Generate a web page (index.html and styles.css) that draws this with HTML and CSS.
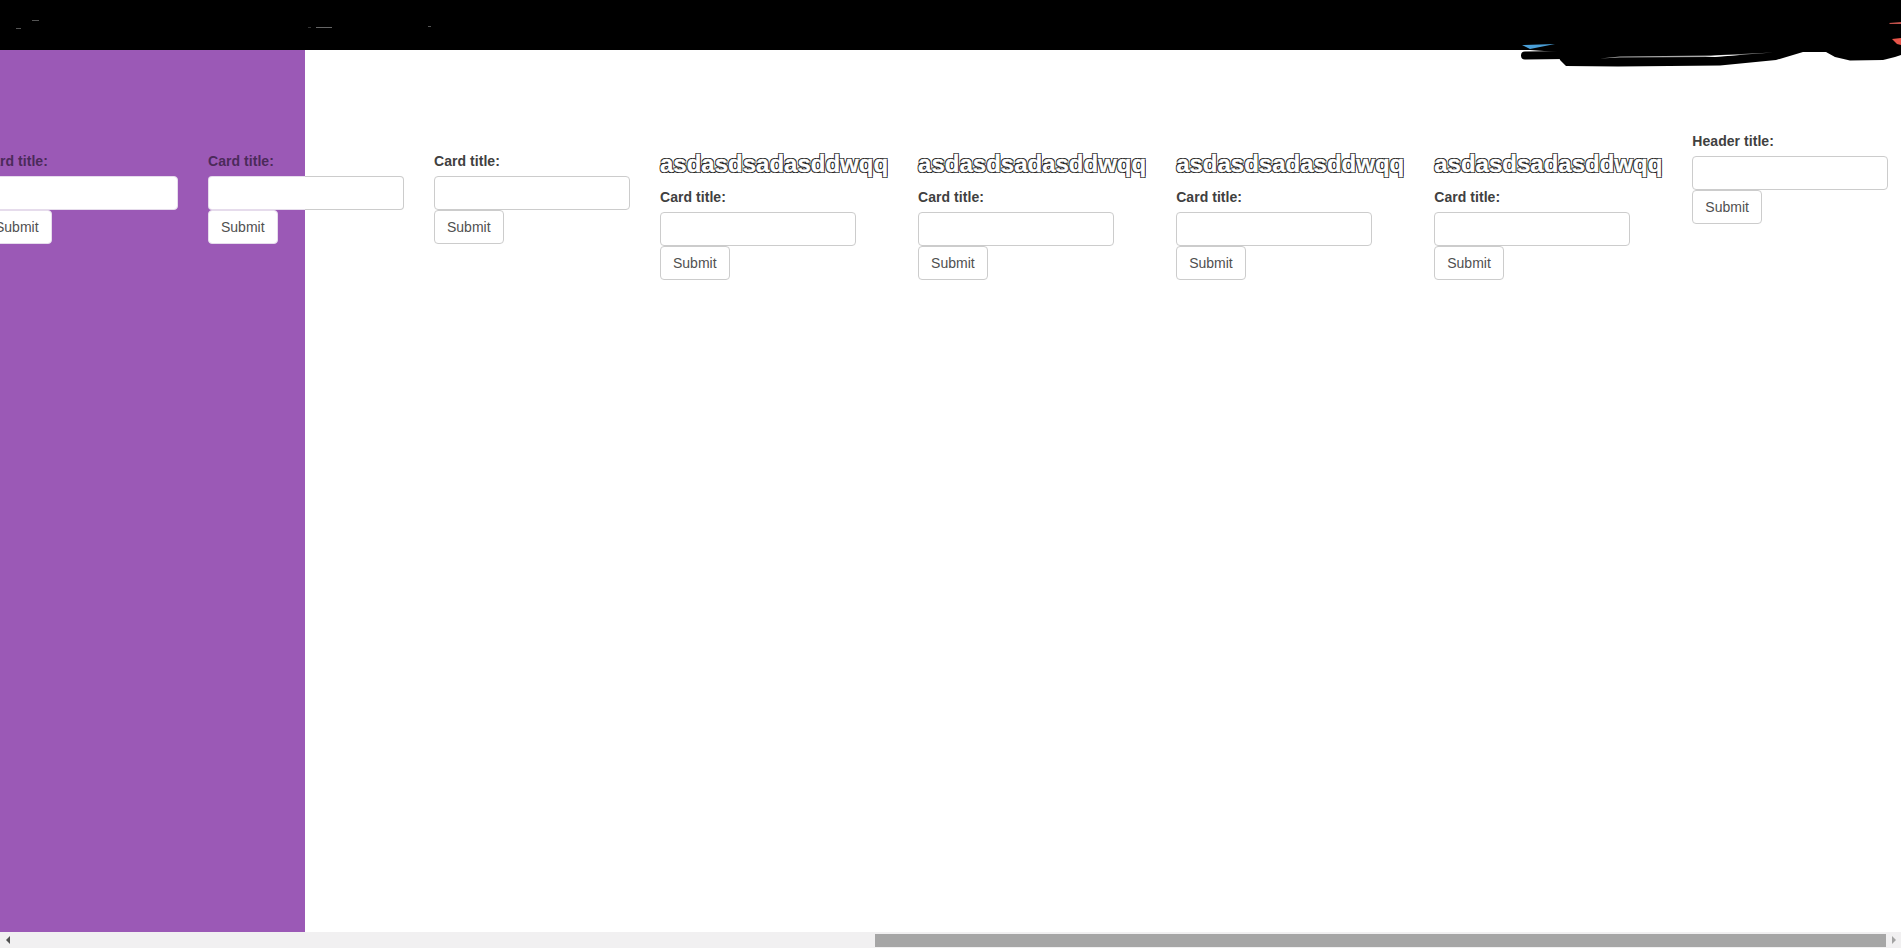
FILE: index.html
```html
<!DOCTYPE html>
<html lang="en">
<head>
<meta charset="utf-8">
<title>Cards</title>
<link rel="stylesheet" href="styles.css">
</head>
<body>
<div class="page">
  <header class="topbar">
    <svg class="specks" width="450" height="50" viewBox="0 0 450 50" aria-hidden="true">
      <rect x="32" y="20" width="7" height="1" fill="#555"/>
      <rect x="16" y="28" width="5" height="1" fill="#555"/>
      <rect x="308" y="27" width="3" height="1" fill="#333"/>
      <rect x="316" y="27" width="16" height="1" fill="#666"/>
      <rect x="428" y="26" width="3" height="1" fill="#555"/>
    </svg>
  </header>
  <main class="stage">
    <aside class="panel"></aside>
    <div class="cards">
      <form class="card">
        <label class="card-label on-purple">Card title:</label>
        <input class="field on-purple" type="text">
        <button class="submit on-purple" type="button">Submit</button>
      </form>
      <form class="card">
        <label class="card-label on-purple">Card title:</label>
        <input class="field straddle" type="text">
        <button class="submit on-purple" type="button">Submit</button>
      </form>
      <form class="card">
        <label class="card-label">Card title:</label>
        <input class="field" type="text">
        <button class="submit" type="button">Submit</button>
      </form>
      <form class="card">
        <h3 class="outlined">asdasdsadasddwqq</h3>
        <label class="card-label">Card title:</label>
        <input class="field" type="text">
        <button class="submit" type="button">Submit</button>
      </form>
      <form class="card">
        <h3 class="outlined">asdasdsadasddwqq</h3>
        <label class="card-label">Card title:</label>
        <input class="field" type="text">
        <button class="submit" type="button">Submit</button>
      </form>
      <form class="card">
        <h3 class="outlined">asdasdsadasddwqq</h3>
        <label class="card-label">Card title:</label>
        <input class="field" type="text">
        <button class="submit" type="button">Submit</button>
      </form>
      <form class="card">
        <h3 class="outlined">asdasdsadasddwqq</h3>
        <label class="card-label">Card title:</label>
        <input class="field" type="text">
        <button class="submit" type="button">Submit</button>
      </form>
      <form class="card card-header">
        <label class="card-label">Header title:</label>
        <input class="field" type="text">
        <button class="submit" type="button">Submit</button>
      </form>
    </div>
  </main>
  <div class="hscroll">
    <span class="arrow arrow-left"></span>
    <div class="track"><div class="thumb"></div></div>
    <span class="arrow arrow-right"></span>
  </div>
  <svg class="scribble" width="401" height="80" viewBox="0 0 401 80" aria-hidden="true">
    <path d="M30 0 L30 50 L58 52 L60 60 L66 66 L118 66.5 L220 65.5 L276 60 L303 52 L326 52 L335 57 L350 60.5 L383 60 L395 57 L401 55 L401 0 Z" fill="#000"/>
    <path d="M25 55.5 L65 55" stroke="#000" stroke-width="8" stroke-linecap="round" fill="none"/>
    <path d="M22 45 L55 44 L30 49 Z" fill="#4a9fd8"/>
    <path d="M100 58.5 L120 57.5 L210 57 L273 52.5 L210 55.5 L120 56.5 Z" fill="#aaa"/>
    <path d="M205 56.5 L225 55 L240 55 L215 57 Z" fill="#fff"/>
    <path d="M389 23 L401 22 L401 24 L390 24 Z" fill="#c0504a"/>
    <path d="M392 39 L401 38 L401 45 L397 44 Z" fill="#e8554a"/>
  </svg>
</div>
</body>
</html>
```

FILE: styles.css
```css
* { box-sizing: border-box; }

html, body {
  margin: 0;
  height: 100%;
  overflow: hidden;
}

body {
  font-family: "Liberation Sans", Arial, sans-serif;
  font-size: 14px;
  line-height: 20px;
  color: #404040;
  background: #fff;
}

.page {
  position: relative;
  display: flex;
  flex-direction: column;
  height: 948px;
  overflow: hidden;
}

.topbar {
  flex: 0 0 50px;
  background: #000;
}

.specks { display: block; }

.stage {
  flex: 1;
  display: grid;
  grid-template-columns: 305px 1fr;
  grid-template-rows: 1fr;
  min-height: 0;
  background: #fff;
}

.panel {
  grid-column: 1;
  grid-row: 1;
  background: #9b59b6;
}

.cards {
  grid-column: 1 / -1;
  grid-row: 1;
  display: flex;
  align-items: flex-start;
  gap: 30px;
  margin-left: -18px;
  padding-top: 81px;
  min-width: 0;
}

.card {
  flex: 0 0 auto;
  display: flex;
  flex-direction: column;
  align-items: flex-start;
  min-width: 196px;
  margin: 20px 0 0;
}

.card-header { margin-top: 0; }

.outlined {
  margin: 0 0 10px;
  font-size: 24px;
  line-height: 26px;
  font-weight: 700;
  color: #fff;
  -webkit-text-stroke: 0.4px #fff;
  text-shadow: -1px -1px 0 #222, 1px -1px 0 #222, -1px 1px 0 #222, 1px 1px 0 #222;
  white-space: nowrap;
}

.card-label {
  display: block;
  margin-bottom: 5px;
  font-weight: 700;
  letter-spacing: 0.05px;
}

.card-label.on-purple { color: #4b2a5a; }

.field {
  display: block;
  width: 196px;
  height: 34px;
  padding: 6px 12px;
  border: 1px solid #ccc;
  border-radius: 4px;
  background: #fff;
  font: inherit;
  color: #555;
}

.field.on-purple { border-color: #e6dcec; }

.field.straddle {
  border-color: transparent;
  background:
    linear-gradient(#fff, #fff) padding-box,
    linear-gradient(90deg, #e6dcec 0 97px, #ccc 97px) border-box;
}

.submit {
  display: block;
  height: 34px;
  padding: 6px 12px;
  border: 1px solid #ccc;
  border-radius: 4px;
  background: #fff;
  font: inherit;
  color: #505050;
}

.submit.on-purple { border-color: #e6dcec; }

.hscroll {
  flex: 0 0 16px;
  display: flex;
  align-items: center;
  background: #f1f0f1;
}

.track {
  flex: 1;
  height: 100%;
  display: flex;
  justify-content: flex-end;
  align-items: center;
}

.thumb {
  width: 1011px;
  height: 13px;
  background: #a6a6a6;
}

.arrow {
  flex: 0 0 15px;
  width: 15px;
  height: 16px;
  display: flex;
  align-items: center;
  justify-content: center;
}

.arrow::before {
  content: "";
  border-top: 4px solid transparent;
  border-bottom: 4px solid transparent;
}

.arrow-left::before { border-right: 4px solid #505050; }
.arrow-right::before { border-left: 4px solid #a3a3a3; }

.scribble {
  position: absolute;
  top: 0;
  right: 0;
}
```
